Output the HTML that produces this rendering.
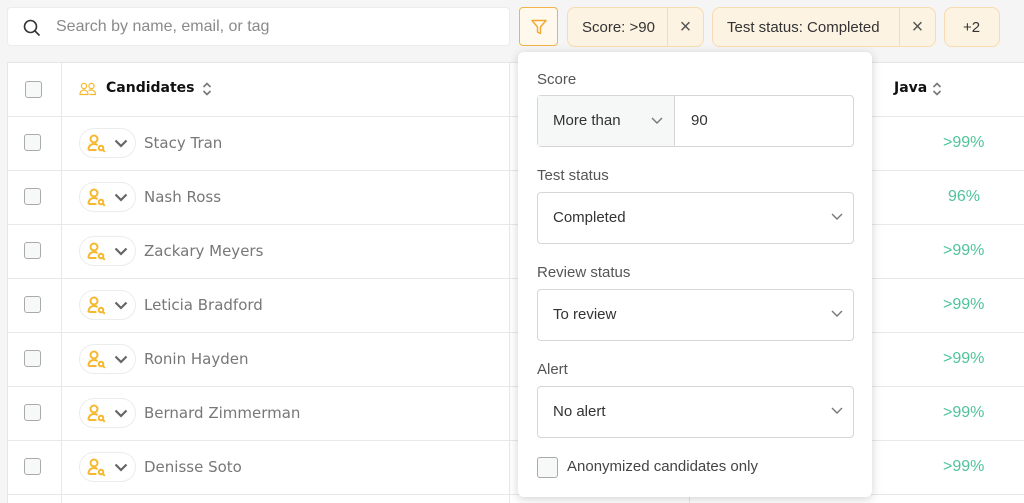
<!DOCTYPE html>
<html style="overflow:hidden;height:503px"><head><style>
*{box-sizing:border-box;margin:0;padding:0}
body{width:1024px;height:503px;overflow:hidden;background:#f5f5f5;font-family:"Liberation Sans",sans-serif;position:relative}
.abs{position:absolute}
.search{left:7px;top:7px;width:503px;height:39px;background:#fff;border:1px solid #ececec;border-radius:4px}
.search span{position:absolute;left:48px;top:10px;font-size:16px;color:#8a8a8a}
.fbtn{left:519px;top:7px;width:39px;height:39px;border:1px solid #f0b44a;border-radius:4px;background:#fff8ec}
.chip{top:7px;height:40px;background:#fdf3e3;border:1px solid #f6dcb0;border-radius:8px;font-size:15px;color:#333}
.chip .t{position:absolute;top:11px}
.chip .x{position:absolute;top:0;height:38px;border-left:1px solid #f6dcb0;width:36px;text-align:center;line-height:38px;font-size:20px;color:#555}
.table{left:7px;top:62px;width:1030px;height:441px;background:#fff;border:1px solid #e6e6e6;border-bottom:none}
.hl{position:absolute;left:0;right:0;height:1px;background:#e8e8e8}
.vl{position:absolute;top:0;bottom:0;width:1px;background:#e8e8e8}
.cb{position:absolute;width:17px;height:17px;border:1.5px solid #aaa;border-radius:3px;background:#f7f8f8}
.pill{position:absolute;left:72px;width:57px;height:30px;border:1px solid #ececec;border-radius:15px;background:#fff}
.name{position:absolute;left:137px;color:#777;font-family:"DejaVu Sans",sans-serif;font-size:15px}
.pct{position:absolute;left:936px;font-size:16px;color:#4fc39a}
.pop{left:518px;top:52px;width:354px;height:445px;background:#fff;border-radius:6px;box-shadow:0 2px 10px rgba(0,0,0,.18)}
.lbl{position:absolute;left:19px;font-size:15px;color:#555}
.sel{position:absolute;left:19px;width:317px;height:52px;border:1px solid #d6d6d6;border-radius:4px;font-size:15px;color:#333}
.sel span{position:absolute;left:15px;top:16px}
.sel svg{position:absolute;right:10px;top:20px}
</style></head><body>
<div class="abs search"><svg style="position:absolute;left:15px;top:11px" width="18" height="18" viewBox="0 0 18 18"><circle cx="7.5" cy="7.5" r="6" fill="none" stroke="#333" stroke-width="1.6"/><path d="M12 12l4.5 4.5" stroke="#333" stroke-width="1.6"/></svg><span>Search by name, email, or tag</span></div>
<div class="abs fbtn"><svg style="position:absolute;left:10px;top:10px" width="18" height="18" viewBox="0 0 18 18"><path d="M2 2.5h14l-5.5 6.5v6.5l-3-1.5v-5z" fill="none" stroke="#f0a830" stroke-width="1.4" stroke-linejoin="round"/></svg></div>
<div class="abs chip" style="left:567px;width:137px"><span class="t" style="left:14px">Score: &gt;90</span><span class="x" style="left:99px">×</span></div>
<div class="abs chip" style="left:712px;width:224px"><span class="t" style="left:14px">Test status: Completed</span><span class="x" style="left:186px">×</span></div>
<div class="abs chip" style="left:944px;width:56px"><span class="t" style="left:18px">+2</span></div>
<div class="abs table">
<div class="vl" style="left:53px"></div><div class="vl" style="left:501px"></div><div class="vl" style="left:681px"></div>
<div class="hl" style="top:53px"></div><div class="hl" style="top:107px"></div><div class="hl" style="top:161px"></div><div class="hl" style="top:215px"></div><div class="hl" style="top:269px"></div><div class="hl" style="top:323px"></div><div class="hl" style="top:377px"></div><div class="hl" style="top:431px"></div>
<div class="cb" style="left:17px;top:18px"></div>
<svg style="position:absolute;left:71px;top:19px" width="18" height="14" viewBox="0 0 18 14"><circle cx="5" cy="4" r="2.6" fill="none" stroke="#f5b82e" stroke-width="1.2"/><circle cx="12.5" cy="4" r="2.6" fill="none" stroke="#f5b82e" stroke-width="1.2"/><path d="M1 12.5c0-3 2-4.5 4-4.5s4 1.5 4 4.5zM9.5 8.5c1-.5 2-.5 3-.5 2 0 4 1.5 4 4.5h-6" fill="none" stroke="#f5b82e" stroke-width="1.2"/></svg>
<span style="position:absolute;left:98px;top:17px;font-family:'DejaVu Sans',sans-serif;font-weight:bold;font-size:14px;color:#111">Candidates</span>
<svg style="position:absolute;left:194px;top:18px" width="10" height="16" viewBox="0 0 10 16"><path d="M1.5 6l3.5-3.5 3.5 3.5M1.5 10l3.5 3.5 3.5-3.5" fill="none" stroke="#777" stroke-width="1.6"/></svg>
<span style="position:absolute;left:886px;top:17px;font-family:'DejaVu Sans',sans-serif;font-weight:bold;font-size:14px;color:#111">Java</span>
<svg style="position:absolute;left:924px;top:18px" width="10" height="16" viewBox="0 0 10 16"><path d="M1.5 6l3.5-3.5 3.5 3.5M1.5 10l3.5 3.5 3.5-3.5" fill="none" stroke="#777" stroke-width="1.6"/></svg>
</div>
<div id="rows"></div>
<script>
var n=["Stacy Tran","Nash Ross","Zackary Meyers","Leticia Bradford","Ronin Hayden","Bernard Zimmerman","Denisse Soto"],p=[">99%","96%",">99%",">99%",">99%",">99%",">99%"],h="";
for(var i=0;i<7;i++){var t=62+54*(i+1);
h+='<div class="cb" style="left:24px;top:'+(t+18)+'px"></div>';
h+='<div class="pill" style="left:79px;top:'+(t+12)+'px"><svg style="position:absolute;left:7px;top:5px" width="20" height="19" viewBox="0 0 20 19"><circle cx="7" cy="5" r="3.5" fill="none" stroke="#f5b82e" stroke-width="2"/><path d="M1.5 16c0-4 2.5-6 5.5-6 1.5 0 2.5.3 3.5 1M1.5 16h8" fill="none" stroke="#f5b82e" stroke-width="2"/><circle cx="14" cy="14" r="2.3" fill="none" stroke="#f5b82e" stroke-width="2"/><path d="M15.8 15.8l2 2" stroke="#f5b82e" stroke-width="2"/></svg><svg style="position:absolute;left:34px;top:10px" width="14" height="9" viewBox="0 0 14 9"><path d="M1.5 1.5l5.5 5.5 5.5-5.5" fill="none" stroke="#666" stroke-width="2.2"/></svg></div>';
h+='<span class="name" style="left:144px;top:'+(t+18)+'px">'+n[i]+'</span>';
h+='<span class="pct" style="left:'+(i==1?948:943)+'px;top:'+(t+18)+'px">'+p[i].replace(">","&gt;")+'</span>';}
document.getElementById("rows").innerHTML=h;
</script>
<div class="abs pop">
<span class="lbl" style="top:19px">Score</span>
<div class="sel" style="top:43px"><div style="position:absolute;left:0;top:0;width:137px;height:50px;background:#f6f7f7;border-right:1px solid #d6d6d6"></div><span>More than</span><svg style="position:absolute;left:113px;top:21px" width="12" height="8" viewBox="0 0 12 8"><path d="M1 1l5 5 5-5" fill="none" stroke="#777" stroke-width="1.4"/></svg><span style="left:153px">90</span></div>
<span class="lbl" style="top:115px">Test status</span>
<div class="sel" style="top:140px"><span>Completed</span><svg width="12" height="8" viewBox="0 0 12 8"><path d="M1 1l5 5 5-5" fill="none" stroke="#777" stroke-width="1.4"/></svg></div>
<span class="lbl" style="top:212px">Review status</span>
<div class="sel" style="top:237px"><span>To review</span><svg width="12" height="8" viewBox="0 0 12 8"><path d="M1 1l5 5 5-5" fill="none" stroke="#777" stroke-width="1.4"/></svg></div>
<span class="lbl" style="top:309px">Alert</span>
<div class="sel" style="top:334px"><span>No alert</span><svg width="12" height="8" viewBox="0 0 12 8"><path d="M1 1l5 5 5-5" fill="none" stroke="#777" stroke-width="1.4"/></svg></div>
<div class="cb" style="left:19px;top:405px;width:21px;height:21px"></div>
<span class="lbl" style="left:49px;top:406px;color:#444">Anonymized candidates only</span>
</div>
</body></html>
